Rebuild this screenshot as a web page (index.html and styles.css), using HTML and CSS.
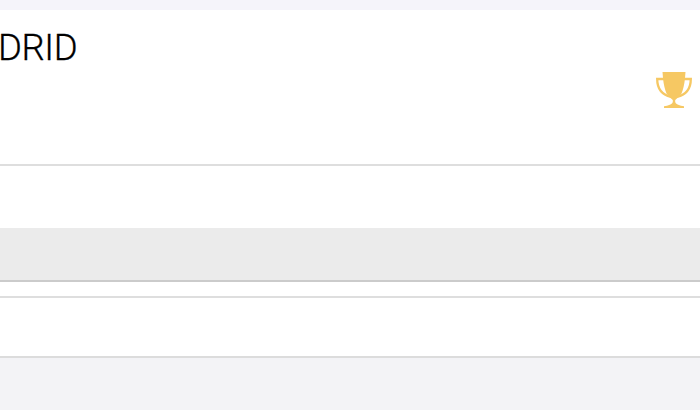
FILE: index.html
```html
<!DOCTYPE html>
<html lang="es">
<head>
    <meta charset="UTF-8">
    <meta name="viewport" content="width=device-width, initial-scale=1.0">
    <title>Madrid</title>
    <link rel="stylesheet" href="styles.css">
</head>
<body>
    <div class="card">
        <header class="card-header">
            <h1 class="title">DRID</h1>
            <svg class="trophy" viewBox="0 0 36 36" width="36" height="36">
                <path class="handle" d="M8 7H1.200C1.200 15.500 5 22.500 15 25M28 7H34.800C34.800 15.500 31 22.500 21 25"/>
                <path class="cup" d="M6.500 0H29.500L29 6C28.500 12 27 18 25.500 21.500C24 24 21.500 26 19.200 28V30C19.500 32 22 33 25 33.700L28 34.200V36H8V34.200L11 33.700C14 33 16.500 32 16.800 30V28C14.500 26 12 24 10.500 21.500C9 18 7.500 12 7 6Z"/>
            </svg>
        </header>
        <div class="row"></div>
        <div class="row row-selected"></div>
        <div class="row row-gap"></div>
        <div class="row row-last"></div>
    </div>
</body>
</html>
```

FILE: styles.css
```css
body {
    margin: 0;
    background-color: #f3f3f6;
    font-family: Roboto, sans-serif;
}
.card {
    background-color: #fff;
    border-top: 10px solid #f5f4fa;
}
.card-header {
    display: flex;
    justify-content: space-between;
    box-sizing: border-box;
    height: 156px;
    padding: 16px 8px 0 0;
    border-bottom: 2px solid #dedede;
}
.title {
    margin: 0 0 0 -2px;
    font-size: 36.5px;
    font-weight: 300;
    line-height: 43px;
    letter-spacing: -0.4px;
    color: #000;
    -webkit-text-stroke: 0.3px #000;
}
.trophy {
    margin-top: 46px;
}
.cup {
    fill: #f6c863;
}
.handle {
    fill: none;
    stroke: #f6c863;
    stroke-width: 2.3;
}
.row {
    box-sizing: border-box;
    height: 62px;
}
.row-selected {
    height: 54px;
    background-color: #ebebeb;
    border-bottom: 2px solid #cbcbcb;
}
.row-gap {
    height: 16px;
    border-bottom: 2px solid #dedede;
}
.row-last {
    height: 60px;
    border-bottom: 2px solid #dcdcdc;
}
```
